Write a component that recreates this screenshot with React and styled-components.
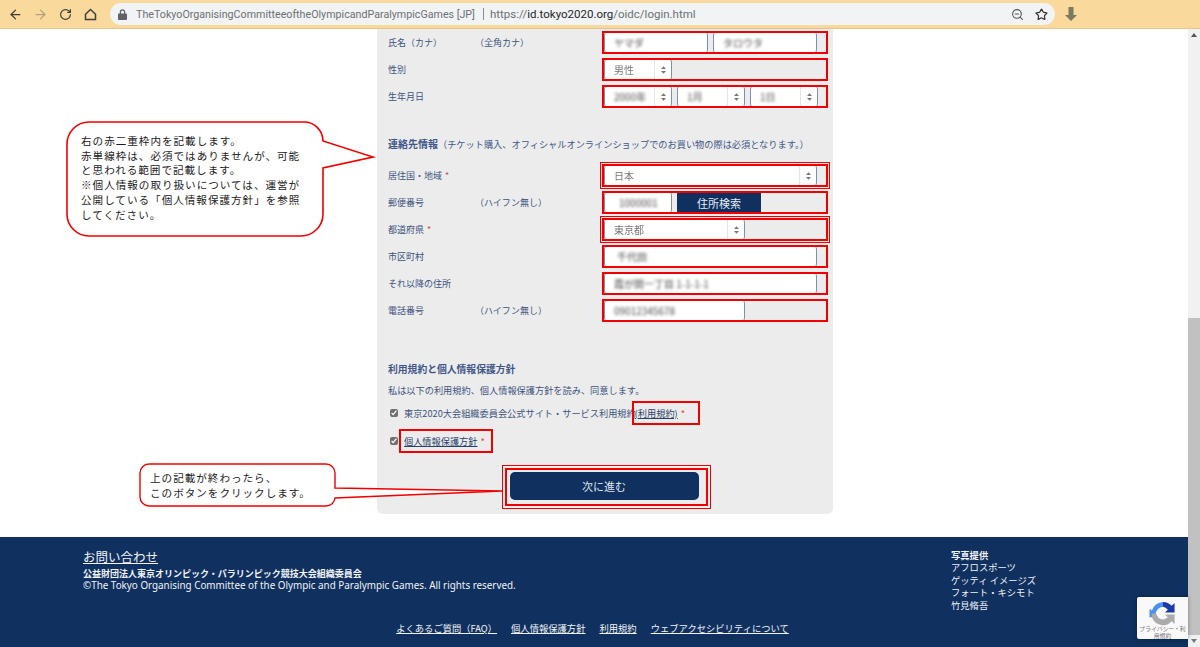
import React from "react";
import styled, { createGlobalStyle, css } from "styled-components";
import { ArrowLeft, ArrowRight, RotateCw, ZoomOut, Star } from "lucide-react";

const NAVY = "#10305f";
const RED = "#f00000";
const JP = `"Noto Sans CJK JP", "Noto Sans", sans-serif`;

const GlobalStyle = createGlobalStyle`
  html, body { margin: 0; padding: 0; height: 100%; overflow: hidden; background: #fff; }
  body { font-family: ${JP}; }
  * { box-sizing: border-box; }
`;

const Window = styled.div`
  position: relative;
  width: 1200px;
  height: 647px;
  overflow: hidden;
  display: flex;
  flex-direction: column;
`;

/* browser chrome */
const Toolbar = styled.header`
  height: 29px;
  flex: none;
  display: flex;
  align-items: center;
  padding: 0 0 0 3px;
  background: #f9d99c;
  border-bottom: 1px solid #e3c48d;
`;

const NavIcon = styled.span`
  width: 25px;
  height: 16px;
  display: flex;
  align-items: center;
  justify-content: center;
  color: ${({ $faded }) => ($faded ? "#b2a37d" : "#3f3f3f")};
`;

const Omnibox = styled.div`
  width: 945px;
  height: 22px;
  margin-left: 7px;
  padding: 0 5px 0 8px;
  display: flex;
  align-items: center;
  border-radius: 11px;
  background: #f1f3f4;
  font: 11.5px Roboto, "Noto Sans", sans-serif;
  color: #6d7175;
  white-space: nowrap;
`;

const SiteName = styled.span`
  margin-left: 9px;
  width: 340px;
  font-size: 10.7px;
`;

const Divider = styled.span`
  width: 1px;
  height: 12px;
  margin: 0 6px 0 7px;
  background: #8a8d90;
`;

const Host = styled.b`
  font-weight: 400;
  color: #26282b;
`;

const OmniRight = styled.div`
  margin-left: auto;
  display: flex;
  align-items: center;
  gap: 11px;
  padding-right: 2px;
  color: #555;
`;

const Extension = styled.span`
  margin-left: 10px;
  display: flex;
`;

const Body = styled.div`
  flex: 1;
  display: flex;
  min-height: 0;
`;

const Main = styled.main`
  flex: 1;
  display: flex;
  flex-direction: column;
  min-width: 0;
`;

/* scrollbar */
const Scrollbar = styled.aside`
  width: 12px;
  flex: none;
  display: flex;
  flex-direction: column;
  align-items: center;
  background: #f1f1f1;
  padding: 4px 0 2px;
`;

const ScrollArrow = styled.span`
  width: 0;
  height: 0;
  border-left: 3px solid transparent;
  border-right: 3px solid transparent;
  ${({ $down }) =>
    $down
      ? css`border-top: 4px solid #777; margin-top: 4px;`
      : css`border-bottom: 4px solid #555; margin-bottom: 281px;`}
`;

const ScrollThumb = styled.span`
  width: 12px;
  height: 317px;
  background: #c1c1c1;
`;

/* form */
const Content = styled.div`
  height: 508px;
  flex: none;
  padding-left: 377px;
`;

const Panel = styled.section`
  width: 456px;
  height: 485px;
  padding-left: 11px;
  background: #ececec;
  border-radius: 0 0 6px 6px;
  color: #3d5380;
  font-size: 9px;
`;

const FormRow = styled.div`
  display: grid;
  grid-template-columns: 87px 127px 226px;
  align-items: center;
  height: 27px;
`;

const Required = styled.span`
  color: #e0433f;
  margin-left: 3px;
`;

const FieldBox = styled.div`
  height: 23px;
  padding-left: 2px;
  display: flex;
  gap: 5px;
  outline: 2px solid ${RED};
  outline-offset: -2px;
  ${({ $double }) =>
    $double &&
    css`
      box-shadow: 0 0 0 1px #f4e4e4, 0 0 0 2px ${RED};
    `}
`;

const fieldLook = css`
  width: ${({ $w }) => $w}px;
  height: 100%;
  flex: none;
  display: flex;
  align-items: center;
  background: #fff;
  border: 1px solid #7e90b2;
  border-radius: 4px;
  color: #555;
  font-size: 10px;
`;

const Input = styled.div`
  ${fieldLook};
  padding-left: ${({ $pad }) => $pad || 9}px;
`;

const Select = styled.div`
  ${fieldLook};
  padding-left: 9px;
  justify-content: space-between;
`;

const SelectArrow = styled.span`
  width: 17px;
  height: 100%;
  flex: none;
  display: flex;
  align-items: center;
  justify-content: center;
  border-left: 1px solid #e4e4e4;
`;

const Hidden = styled.span`
  filter: blur(${({ $soft }) => ($soft ? 0.7 : 1.7)}px);
  color: ${({ $soft }) => ($soft ? "#777" : "#4d4d4d")};
  white-space: nowrap;
`;

const SearchButton = styled.button`
  width: 84px;
  height: 19px;
  margin: 2px 0 0 0;
  border: 0;
  padding: 0;
  background: ${NAVY};
  color: #e8edf5;
  font: 11px ${JP};
`;

const SectionTitle = styled.h2`
  margin: ${({ $top }) => $top}px 0 ${({ $bottom }) => $bottom}px;
  font-size: ${({ $size }) => $size}px;
  line-height: 18px;
  font-weight: 700;
  color: #41578a;
  white-space: nowrap;
`;

const TitleNote = styled.span`
  font-weight: 400;
  font-size: 9.2px;
`;

const Agree = styled.p`
  margin: 3px 0 0;
  line-height: 18px;
  font-size: 9.2px;
  color: #3d5380;
`;

const CheckRow = styled.label`
  height: 28px;
  display: flex;
  align-items: center;
  font-size: 9.2px;
  white-space: nowrap;
`;

const Check = styled.input.attrs({ type: "checkbox" })`
  width: 8px;
  height: 8px;
  margin: 0 ${({ $gap }) => $gap}px 0 2px;
  accent-color: #6f6f6f;
`;

const TermsLink = styled.a`
  color: #2b3f6b;
  text-decoration: underline;
`;

const RedInline = styled.span`
  height: 24px;
  display: inline-flex;
  align-items: center;
  padding: 0 ${({ $right }) => $right}px 0 ${({ $left }) => $left}px;
  margin-left: ${({ $shift }) => $shift}px;
  border: 2px solid ${RED};
`;

const SubmitRow = styled.div`
  display: flex;
  justify-content: center;
  margin: 13px 0 0 -9px;
`;

const SubmitFrame = styled.div`
  padding: 2px 7px 4px 3px;
  border: 2px solid ${RED};
  box-shadow: 0 0 0 2px #f7eeee, 0 0 0 3px ${RED};
`;

const SubmitButton = styled.button`
  width: 189px;
  height: 28px;
  display: block;
  border: 0;
  border-radius: 5px;
  background: ${NAVY};
  color: #dfe5ef;
  font: 11px ${JP};
`;

/* footer */
const Footer = styled.footer`
  flex: 1;
  position: relative;
  display: flex;
  flex-direction: column;
  background: ${NAVY};
  color: #f1f3f7;
  padding: 11px 0 0 83px;
`;

const FooterTop = styled.div`
  display: flex;
  height: 71px;
`;

const FooterLeft = styled.div`
  width: 868px;
`;

const ContactLink = styled.a`
  display: block;
  width: max-content;
  font-size: 12.5px;
  line-height: 18px;
  text-decoration: underline;
`;

const OrgName = styled.div`
  margin-top: 1px;
  font-size: 9px;
  font-weight: 700;
  line-height: 13px;
`;

const Copyright = styled.div`
  margin-top: -1px;
  font: 9.85px/13px "Noto Sans", sans-serif;
  white-space: nowrap;
`;

const Credits = styled.div`
  margin-top: 1px;
  font-size: 9.3px;
  line-height: 12.4px;
  white-space: nowrap;
`;

const CreditHead = styled.div`
  font-weight: 700;
`;

const FooterLinks = styled.nav`
  display: flex;
  justify-content: center;
  gap: 14px;
  margin: 2px 0 0 -86px;
  font-size: 9.3px;
`;

const FooterLink = styled.a`
  text-decoration: underline;
  white-space: nowrap;
`;

const Recaptcha = styled.div`
  position: absolute;
  left: 1137px;
  top: 60px;
  width: 51px;
  height: 42px;
  padding-top: 3px;
  background: #f9f9f9;
  border-radius: 2px 0 0 2px;
  box-shadow: 0 0 4px rgba(0, 0, 0, 0.35);
  display: flex;
  flex-direction: column;
  align-items: center;
  overflow: hidden;
`;

const RecaptchaText = styled.div`
  margin-top: -1px;
  font-size: 5.8px;
  line-height: 6.5px;
  color: #777;
  text-align: center;
  white-space: nowrap;
`;

/* annotations lying over the page */
const Callout = styled.div`
  position: absolute;
  left: ${({ $x }) => $x}px;
  top: ${({ $y }) => $y}px;
`;

const CalloutText = styled.div`
  position: absolute;
  left: ${({ $x }) => $x}px;
  top: ${({ $y }) => $y}px;
  font-size: 10.6px;
  letter-spacing: 0.97px;
  line-height: ${({ $lh }) => $lh}px;
  color: #1c1c1c;
  white-space: nowrap;
`;

const Arrows = () => (
  <svg width="5" height="8" viewBox="0 0 6 9" fill="#777">
    <path d="M3 0 6 3.4H0zM3 9 0 5.6h6z" />
  </svg>
);

const SelectField = ({ w, value, soft }) => (
  <Select $w={w}>
    <Hidden $soft={soft}>{value}</Hidden>
    <SelectArrow>
      <Arrows />
    </SelectArrow>
  </Select>
);

const Row = ({ label, hint, required, double, children }) => (
  <FormRow>
    <span>
      {label}
      {required && <Required>*</Required>}
    </span>
    <span>{hint}</span>
    <FieldBox $double={double}>{children}</FieldBox>
  </FormRow>
);

const App = () => (
  <Window>
    <GlobalStyle />
    <Toolbar>
      <NavIcon>
        <ArrowLeft size={15} strokeWidth={2} />
      </NavIcon>
      <NavIcon $faded>
        <ArrowRight size={15} strokeWidth={2} />
      </NavIcon>
      <NavIcon>
        <RotateCw size={13} strokeWidth={2.2} />
      </NavIcon>
      <NavIcon>
        <svg width="13" height="13" viewBox="0 0 13 13" fill="none" stroke="#3f3f3f" strokeWidth="1.5">
          <path d="M6.5 1.5 1.5 6.3V11.5H11.5V6.3z" />
        </svg>
      </NavIcon>
      <Omnibox>
        <svg width="9" height="11" viewBox="0 0 9 11" fill="#5f6368">
          <path d="M1 4.5h.8V3a2.7 2.7 0 0 1 5.4 0v1.5H8a1 1 0 0 1 1 1V10a1 1 0 0 1-1 1H1a1 1 0 0 1-1-1V5.500a1 1 0 0 1 1-1zM3 4.500h3V3a1.500 1.500 0 0 0-3 0z" />
        </svg>
        <SiteName>TheTokyoOrganisingCommitteeoftheOlympicandParalympicGames [JP]</SiteName>
        <Divider />
        https://<Host>id.tokyo2020.org</Host>/oidc/login.html
        <OmniRight>
          <ZoomOut size={13} />
          <Star size={13} strokeWidth={2.2} color="#333" />
        </OmniRight>
      </Omnibox>
      <Extension>
        <svg width="12" height="14" viewBox="0 0 12 14" fill="#7d7a63">
          <path d="M3.500 0h5v8H12l-6 6-6-6h3.500z" />
        </svg>
      </Extension>
    </Toolbar>

    <Body>
      <Main>
        <Content>
          <Panel>
            <Row label="氏名（カナ）" hint="（全角カナ）">
              <Input $w={104}><Hidden>ヤマダ</Hidden></Input>
              <Input $w={104}><Hidden>タロウタ</Hidden></Input>
            </Row>
            <Row label="性別">
              <SelectField w={68} value="男性" soft />
            </Row>
            <Row label="生年月日">
              <SelectField w={68} value="2000年" />
              <SelectField w={68} value="1月" />
              <SelectField w={68} value="1日" />
            </Row>

            <SectionTitle $top={25} $bottom={9} $size={10}>
              連絡先情報<TitleNote>（チケット購入、オフィシャルオンラインショップでのお買い物の際は必須となります。）</TitleNote>
            </SectionTitle>

            <Row label="居住国・地域" required double>
              <SelectField w={213} value="日本" soft />
            </Row>
            <Row label="郵便番号" hint="（ハイフン無し）">
              <Input $w={68} $pad={14}><Hidden>1000001</Hidden></Input>
              <SearchButton>住所検索</SearchButton>
            </Row>
            <Row label="都道府県" required double>
              <SelectField w={141} value="東京都" soft />
            </Row>
            <Row label="市区町村">
              <Input $w={213} $pad={12}><Hidden>千代田</Hidden></Input>
            </Row>
            <Row label="それ以降の住所">
              <Input $w={213}><Hidden>霞が関一丁目 1-1-1-1</Hidden></Input>
            </Row>
            <Row label="電話番号" hint="（ハイフン無し）">
              <Input $w={141}><Hidden>09012345678</Hidden></Input>
            </Row>

            <SectionTitle $top={36} $bottom={0} $size={9.8}>
              利用規約と個人情報保護方針
            </SectionTitle>
            <Agree>私は以下の利用規約、個人情報保護方針を読み、同意します。</Agree>
            <CheckRow>
              <Check defaultChecked $gap={6} />
              東京2020大会組織委員会公式サイト・サービス利用規約
              <RedInline $left={1} $right={13} $shift={-4}>
                <TermsLink>(利用規約)</TermsLink>
                <Required>*</Required>
              </RedInline>
            </CheckRow>
            <CheckRow>
              <Check defaultChecked $gap={1} />
              <RedInline $left={3} $right={6} $shift={0}>
                <TermsLink>個人情報保護方針</TermsLink>
                <Required>*</Required>
              </RedInline>
            </CheckRow>
            <SubmitRow>
              <SubmitFrame>
                <SubmitButton>次に進む</SubmitButton>
              </SubmitFrame>
            </SubmitRow>
          </Panel>
        </Content>

        <Footer>
          <FooterTop>
            <FooterLeft>
              <ContactLink>お問い合わせ</ContactLink>
              <OrgName>公益財団法人東京オリンピック・パラリンピック競技大会組織委員会</OrgName>
              <Copyright>©The Tokyo Organising Committee of the Olympic and Paralympic Games. All rights reserved.</Copyright>
            </FooterLeft>
            <Credits>
              <CreditHead>写真提供</CreditHead>
              <div>アフロスポーツ</div>
              <div>ゲッティ イメージズ</div>
              <div>フォート・キシモト</div>
              <div>竹見脩吾</div>
            </Credits>
          </FooterTop>
          <FooterLinks>
            <FooterLink>よくあるご質問（FAQ）</FooterLink>
            <FooterLink>個人情報保護方針</FooterLink>
            <FooterLink>利用規約</FooterLink>
            <FooterLink>ウェブアクセシビリティについて</FooterLink>
          </FooterLinks>
          <Recaptcha>
            <svg width="28" height="28" viewBox="0 0 28 28" fill="none">
              <path d="M14 2A12 12 0 0 0 2.500 11L0 9v9h9l-2.600-3A8 8 0 0 1 14 7z" fill="#4a90f0" />
              <path d="M14 2a12 12 0 0 1 9 4l3-3v10h-10l3-3a8 8 0 0 0-5-3z" fill="#1c3aa9" />
              <path d="M2 14h5a7 7 0 0 0 12 4l-3-3h10v10l-3-3A12 12 0 0 1 2 14z" fill="#ababab" />
            </svg>
            <RecaptchaText>
              プライバシー・利
              <br />
              用規約
            </RecaptchaText>
          </Recaptcha>
        </Footer>
      </Main>
      <Scrollbar>
        <ScrollArrow />
        <ScrollThumb />
        <ScrollArrow $down />
      </Scrollbar>
    </Body>

    <Callout $x={66} $y={121}>
      <svg width="312" height="116" viewBox="0 0 312 116" display="block">
        <path
          d="M23 1H238A19 19 0 0 1 257 20L307 36 257 47V93A22 22 0 0 1 235 115H23A22 22 0 0 1 1 93V23A22 22 0 0 1 23 1Z"
          fill="#fff"
          stroke={RED}
          strokeWidth="1.6"
        />
      </svg>
      <CalloutText $x={15} $y={13} $lh={14.7}>
        右の赤二重枠内を記載します。
        <br />
        赤単線枠は、必須ではありませんが、可能
        <br />
        と思われる範囲で記載します。
        <br />
        ※個人情報の取り扱いについては、運営が
        <br />
        公開している「個人情報保護方針」を参照
        <br />
        してください。
      </CalloutText>
    </Callout>

    <Callout $x={139} $y={463}>
      <svg width="366" height="45" viewBox="0 0 366 45" display="block">
        <path
          d="M10 1H187A9 9 0 0 1 196 10V25L363 28 196 35A9 9 0 0 1 187 43H10A9 9 0 0 1 1 34V10A9 9 0 0 1 10 1Z"
          fill="#fff"
          stroke={RED}
          strokeWidth="1.4"
        />
      </svg>
      <CalloutText $x={11} $y={7} $lh={15}>
        上の記載が終わったら、
        <br />
        このボタンをクリックします。
      </CalloutText>
    </Callout>
  </Window>
);

export default App;
